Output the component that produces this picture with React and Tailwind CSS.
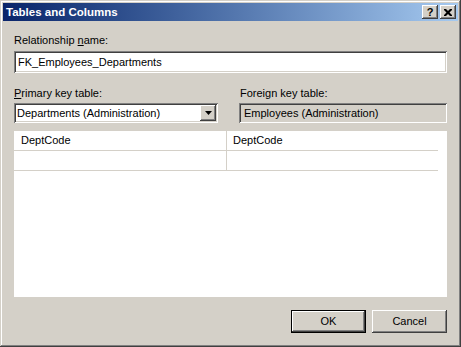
import React from 'react';

const raised =
  'shadow-[inset_-1px_-1px_0_#404040,inset_1px_1px_0_#ffffff,inset_-2px_-2px_0_#808080,inset_2px_2px_0_#d4d0c8]';
const sunken =
  'shadow-[inset_1px_1px_0_#808080,inset_-1px_-1px_0_#ffffff,inset_2px_2px_0_#404040,inset_-2px_-2px_0_#d4d0c8]';

const CaptionButton = ({ children }) => (
  <div className={`w-[16px] h-[14px] bg-[#d4d0c8] flex items-center justify-center ${raised}`}>
    {children}
  </div>
);

const Button = ({ label, isDefault }) => (
  <div className={`w-[75px] h-[23px] ${isDefault ? 'border border-black' : ''}`}>
    <div className={`w-full h-full bg-[#d4d0c8] flex items-center justify-center ${raised}`}>
      {label}
    </div>
  </div>
);

const App = () => {
  return (
    <div
      className={`w-[461px] h-[347px] bg-[#d4d0c8] p-[3px] flex flex-col font-['Liberation_Sans',Arial,sans-serif] text-[11px] leading-[13px] text-black shadow-[inset_-1px_-1px_0_#404040,inset_1px_1px_0_#d4d0c8,inset_-2px_-2px_0_#808080,inset_2px_2px_0_#ffffff]`}
    >
      {/* title bar */}
      <div className="h-[18px] bg-linear-to-r from-[#0a246a] to-[#a6caf0] flex items-center pl-[3px] pr-[2px]">
        <span className="text-white font-bold text-[11.5px] flex-1">Tables and Columns</span>
        <div className="flex gap-[2px]">
          <CaptionButton>
            <span className="font-bold text-[11px] leading-none pt-[1px]">?</span>
          </CaptionButton>
          <CaptionButton>
            <svg width="8" height="7" viewBox="0 0 8 7">
              <path d="M0 0h2l2 2 2-2h2v1L5.5 3.5 8 6v1H6L4 5 2 7H0V6l2.5-2.5L0 1z" fill="#000" />
            </svg>
          </CaptionButton>
        </div>
      </div>

      <div className="flex-1 flex flex-col px-[11px]">
        <div className="mt-[13px] h-[13px]">
          Relationship <span className="underline">n</span>ame:
        </div>
        <div className={`mt-[4px] h-[22px] bg-white flex items-center pl-[4px] ${sunken}`}>
          FK_Employees_Departments
        </div>

        <div className="mt-[14px] grid grid-cols-[204px_1fr] gap-x-[21px]">
          <div>
            <span className="underline">P</span>rimary key table:
          </div>
          <div className="pl-[1px]">Foreign key table:</div>
          <div className={`mt-[3px] h-[20px] bg-white flex items-center pl-[3px] pr-[2px] ${sunken}`}>
            <span className="flex-1">Departments (Administration)</span>
            <div className={`w-[16px] h-[16px] bg-[#d4d0c8] flex items-center justify-center ${raised}`}>
              <svg width="7" height="4" viewBox="0 0 7 4">
                <path d="M0 0h7L3.5 4z" fill="#000" />
              </svg>
            </div>
          </div>
          <div className={`mt-[3px] h-[20px] bg-[#d4d0c8] flex items-center pl-[5px] ${sunken}`}>
            Employees (Administration)
          </div>
        </div>

        <div className="mt-[8px] h-[166px] bg-white">
          <div className="w-[424px]">
            {['DeptCode', ''].map((v, i) => (
              <div key={i} className="h-[20px] flex border-b border-[#d4d0c8]">
                <div className="w-[213px] border-r border-[#d4d0c8] pl-[7px] flex items-center">{v}</div>
                <div className="flex-1 pl-[6px] flex items-center">{v}</div>
              </div>
            ))}
          </div>
        </div>

        <div className="mt-[13px] flex justify-end gap-[6px]">
          <Button label="OK" isDefault />
          <Button label="Cancel" />
        </div>
      </div>
    </div>
  );
};

export default App;
